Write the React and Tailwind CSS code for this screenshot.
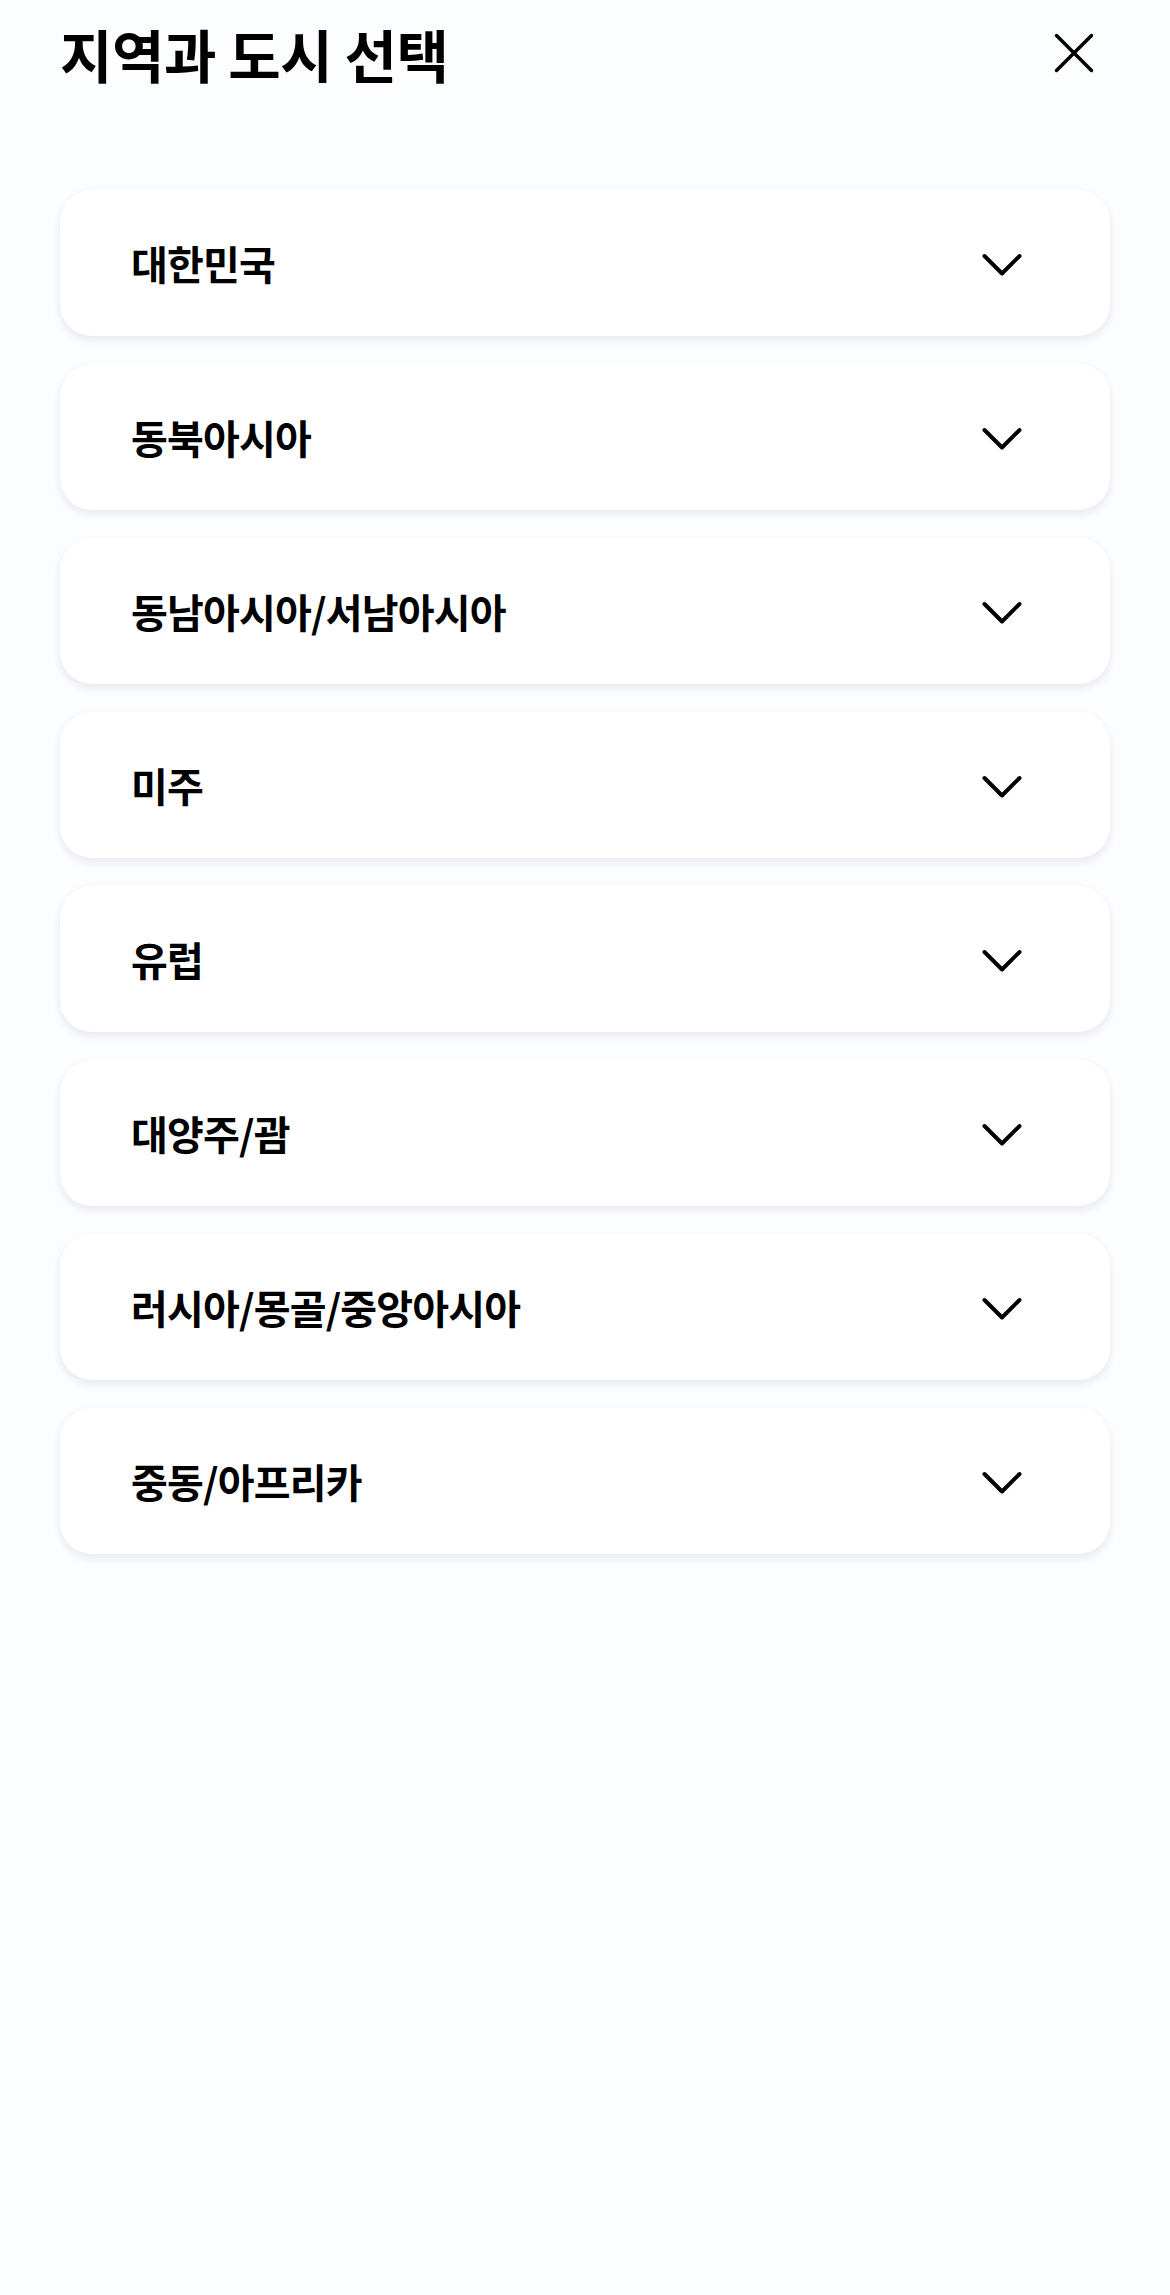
import React, { useState } from 'react';

const regions = [
  "대한민국",
  "동북아시아",
  "동남아시아/서남아시아",
  "미주",
  "유럽",
  "대양주/괌",
  "러시아/몽골/중앙아시아",
  "중동/아프리카",
];

function Chevron({ open }) {
  return (
    <svg
      width="40"
      height="24"
      viewBox="0 0 40 24"
      fill="none"
      className={open ? "mt-[3px] rotate-180" : "mt-[3px]"}
    >
      <path
        d="M2.5 3 L20 20.5 L37.5 3"
        stroke="#000"
        strokeWidth="4"
        strokeLinecap="round"
        strokeLinejoin="round"
      />
    </svg>
  );
}

function RegionCard({ name, open, onToggle }) {
  return (
    <button
      type="button"
      onClick={onToggle}
      className="flex h-[146px] w-full items-center justify-between rounded-[32px] bg-white pl-[71px] pr-[88px] shadow-[0_4px_10px_rgba(20,24,40,0.09)]"
    >
      <span className="text-[40px] font-bold leading-none tracking-[-0.8px] text-black">{name}</span>
      <Chevron open={open} />
    </button>
  );
}

export default function App() {
  const [openIdx, setOpenIdx] = useState(null);

  return (
    <div
      className="min-h-[2295px] bg-[#fcfdff] px-[60px]"
      style={{ fontFamily: '"Noto Sans CJK KR", "Noto Sans", sans-serif' }}
    >
      <div className="flex h-[106px] items-center justify-between">
        <h1 className="text-[57px] font-bold leading-none tracking-[-0.5px] text-black">지역과 도시 선택</h1>
        <button type="button" className="mr-[16px]" aria-label="닫기">
          <svg width="40" height="40" viewBox="0 0 40 40" fill="none">
            <path
              d="M2.5 2.5 L37.5 37.5 M37.5 2.5 L2.5 37.5"
              stroke="#000"
              strokeWidth="3.5"
              strokeLinecap="round"
            />
          </svg>
        </button>
      </div>

      <div className="mt-[84px] flex flex-col gap-[28px]">
        {regions.map((name, i) => (
          <RegionCard
            key={name}
            name={name}
            open={openIdx === i}
            onToggle={() => setOpenIdx(openIdx === i ? null : i)}
          />
        ))}
      </div>
    </div>
  );
}
